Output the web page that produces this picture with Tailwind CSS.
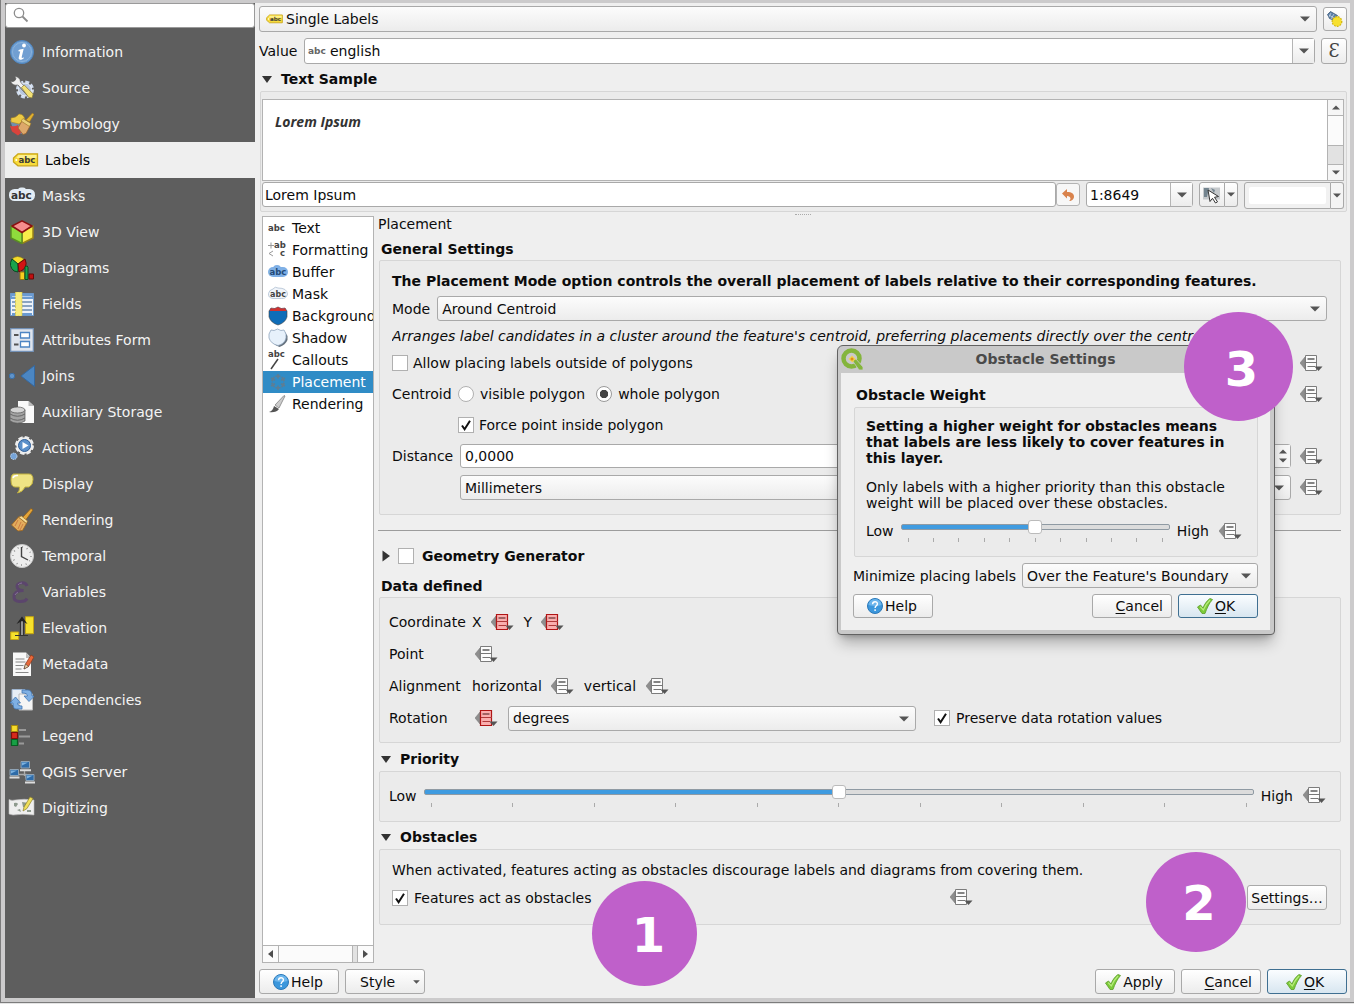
<!DOCTYPE html>
<html lang="en">

<head>
    <meta charset="UTF-8">
    <meta name="viewport" content="width=device-width, initial-scale=1.0">
    <title>Layer Properties - Labels</title>
    <script src="https://cdn.jsdelivr.net/npm/@tailwindcss/browser@4"></script>
</head>

<body class="flex flex-col min-h-screen pb-px bg-[#e4e4e4] font-['DejaVu_Sans',sans-serif] text-sm leading-4 text-[#0c0c0c]">

    <!-- Shared icons -->
    <svg class="hidden">
        <symbol id="i-dd" viewBox="0 0 23 17">
            <path d="M0 8 5 2v12z" fill="#8e8e8e" stroke="#777" stroke-width=".5" />
            <path d="M5.5.5h11v15h-11z" fill="#fcfcfc" stroke="#7c7c7c" />
            <path d="M7.500 4h7" stroke="#666" stroke-width="1.600" />
            <path d="M6 7.500h11M7.500 11.500H15" stroke="#777" />
            <path d="M14.500 11.500h8L18.500 16z" fill="#555" />
        </symbol>
        <symbol id="i-dd-red" viewBox="0 0 23 17">
            <path d="M0 8 5 2v12z" fill="#8e8e8e" stroke="#777" stroke-width=".5" />
            <path d="M5.500.5h11v15h-11z" fill="#faaeae" stroke="#b01515" stroke-width="1.200" />
            <path d="M7.500 4h7" stroke="#8a5050" stroke-width="1.600" />
            <path d="M6 7.500h11M7.500 11.500H15" stroke="#b03a3a" />
            <path d="M14.500 11.500h8L18.500 16z" fill="#555" />
        </symbol>
        <symbol id="i-down" viewBox="0 0 10 6">
            <path d="M0 .5h10L5 5.500z" fill="#555" />
        </symbol>
        <symbol id="i-up" viewBox="0 0 10 6">
            <path d="M0 5.500h10L5 .5z" fill="#555" />
        </symbol>
        <symbol id="i-check" viewBox="0 0 16 16">
            <path d="m4 8.500 2.600 3.800L12 3.800" fill="none" stroke="#111" stroke-width="2" />
        </symbol>
        <symbol id="i-help" viewBox="0 0 16 16">
            <circle cx="8" cy="8" r="7.500" fill="#3c97dc" stroke="#2b78b8" />
            <path d="M1.500 7a6.500 6 0 0 1 13 0q-6 2-13 0z" fill="#6cb5ec" />
            <path d="M5.600 6.200C5.700 2.800 10.500 3 10.400 6c0 1.800-2.300 1.900-2.300 4M8.100 11.300v1.700" fill="none" stroke="#fff" stroke-width="1.400" />
        </symbol>
        <symbol id="i-ok" viewBox="0 0 16 16">
            <path d="m.5 9 3-2 2.500 3C7.500 6 10 2.500 13 .5l2.500 1C12 5.500 10 10 8 15.500H5z" fill="#7ccb3a" stroke="#5a9c28" stroke-width=".8" />
            <path d="M3.200 8.600 6.300 12C8 8 10.500 4.500 13 2" fill="none" stroke="#b9ec7e" stroke-width="1.200" />
        </symbol>
        <symbol id="i-tag" viewBox="0 0 26 14">
            <path d="M5.500.8h19.500v12H5.500L1 9V5z" fill="#f8dc3c" stroke="#c9a51a" stroke-width="1.300" />
            <path d="M6 2h18v3H4z" fill="#fdf08c" />
            <circle cx="3.800" cy="7" r="1" fill="#fff" />
            <text x="6" y="10" font-family="DejaVu Sans" font-weight="bold" font-size="8.500" fill="#3a3a3a">abc</text>
        </symbol>
    </svg>

    <div class="relative flex flex-1 bg-[#cccbcc] border-l border-b border-[#7c7c7c] pt-[3px] px-1 pb-1">

        <!-- Sidebar -->
        <nav class="w-[250px] shrink-0 bg-[#5e5e5e] text-[#f4f4f4]">
            <div class="relative mb-1.5">
                <input type="search" aria-label="Search" class="block w-full h-[25px] bg-white border border-[#9a9a9a] rounded-[3px] pl-7 text-black outline-none">
                <svg class="absolute left-2 top-1 size-4" viewBox="0 0 16 16" fill="none" stroke="#8c8c8c"><circle cx="6" cy="6" r="4.700" stroke-width="1.300" /><path d="m9.500 9.500 5 5" stroke-width="1.800" /></svg>
            </div>
            <a href="#" class="flex items-center gap-2 h-9 pl-[5px]">
                <svg class="size-6" viewBox="0 0 24 24"><circle cx="12" cy="12" r="11.500" fill="#6d9dd0" stroke="#4f86c1" /><circle cx="12" cy="12" r="9.500" fill="#719fd2" stroke="#8ab2dc" /><circle cx="14" cy="5.500" r="1.900" fill="#fff" /><path d="M8.500 10.300c2-1 3.500-1.400 5.200-1.500l-2 8.200c-.2 1.300.8 1 2 .2v1.200c-2.500 1.700-5.500 2-5-.8l1.500-6-1.800-.3z" fill="#fff" /></svg>
                Information
            </a>
            <a href="#" class="flex items-center gap-2 h-9 pl-[5px]">
                <svg class="size-6" viewBox="0 0 24 24"><circle cx="15" cy="13.500" r="7.500" fill="none" stroke="#cfdcef" stroke-width="3" stroke-dasharray="3.900 2" /><circle cx="15" cy="13.500" r="6.500" fill="#b9c8e0" stroke="#edf2fa" /><path d="M9 8l10 11" stroke="#444" stroke-width="3.500" /><path d="M.5 5q2.500 1.500 4.500-.500T4.500.500q5.500 0 6 5.500L20 17l-2.500 2.500L8 9Q2 10 .5 5z" fill="#f0f0f0" stroke="#555" stroke-width=".6" /><path d="m11.500 11.500 2.700-2.500 9 9-1.200 4-3.500-.8z" fill="#f3e176" stroke="#7f7639" stroke-width=".7" /></svg>
                Source
            </a>
            <a href="#" class="flex items-center gap-2 h-9 pl-[5px]">
                <svg class="size-6" viewBox="0 0 24 24"><path d="M0 8q4 1 8-1l8 6-4 9-6-2-4-6z" fill="#6f8fb0" /><path d="M1 6q5 0 8-4 5 0 6 6l-6 4-8-2z" fill="#ecca45" stroke="#aa8520" stroke-width=".6" /><path d="M0 14q5 1 8-1l3 8-3 2.500-6-4z" fill="#d8433c" /><path d="m8 16 4-7 8 5-4 7.500-3 1z" fill="#dda86b" stroke="#99622a" stroke-width=".7" /><path d="m11 9 2-2.500 8 5-1.500 3z" fill="#e8cf7a" stroke="#9b7021" stroke-width=".6" /><path d="m16 8 6.500-7L24 2.500 19.500 10z" fill="#e0b12f" stroke="#9b7021" stroke-width=".6" /></svg>
                Symbology
            </a>
            <a href="#" aria-current="page" class="flex items-center gap-1.5 h-9 pl-[7px] bg-[#efefef] text-black">
                <svg class="w-[27px] h-3.5"><use href="#i-tag" /></svg>
                Labels
            </a>
            <a href="#" class="flex items-center gap-2 h-9 pl-[5px]">
                <svg class="size-6 overflow-visible" viewBox="0 0 24 24"><rect x="-1" y="5" width="26" height="12" rx="5.500" fill="#e3edf6" /><rect x="8" y="3.500" width="8" height="12" rx="3" fill="#e3edf6" /><text x="1" y="14.500" font-family="DejaVu Sans" font-weight="bold" font-size="10.500" fill="#333">abc</text></svg>
                Masks
            </a>
            <a href="#" class="flex items-center gap-2 h-9 pl-[5px]">
                <svg class="size-6" viewBox="0 0 24 24" stroke-width="1.500" stroke-linejoin="round"><path d="m12 11 11-5v12L12 23.500z" fill="#f9ec4a" stroke="#9a8417" /><path d="M12 11 1 6v12l11 5.500z" fill="#8fdc3c" stroke="#5a8c24" /><path d="m12 .8 10 5.200-10 6.500L2 6z" fill="#f68d8d" stroke="#8b1010" /></svg>
                3D View
            </a>
            <a href="#" class="flex items-center gap-2 h-9 pl-[5px]">
                <svg class="size-6" viewBox="0 0 24 24"><path d="M8 8 2 3Q7-2 14 3z" fill="#f6db2b" stroke="#8a7a10" stroke-width=".6" /><path d="M8 8 2 3Q-2 10 4 15l4 1z" fill="#18a34c" stroke="#064d20" /><path d="m8 8 7-5q4 9-6 13z" fill="#d11414" stroke="#690909" /><path d="M10 16h4.500v7.500H10z" fill="#f6cf1f" stroke="#957510" /><path d="M15 10.500q3-1.500 3 1v12h-3z" fill="#18a34c" stroke="#064d20" /><path d="M19 18h4.500v5H19z" fill="#c01010" stroke="#690909" /></svg>
                Diagrams
            </a>
            <a href="#" class="flex items-center gap-2 h-9 pl-[5px]">
                <svg class="size-6" viewBox="0 0 24 24"><path d="M.5 1.500h23v22H.5z" fill="#eef3f9" stroke="#6b97c8" /><path d="M1 2h22v5H1z" fill="#6b9bd2" /><path d="M2 4.500h20" stroke="#b5cfec" /><path d="M2 10h20M2 14h20M2 18h20" stroke="#8aa4c2" stroke-width="1.800" /><path d="M2 22h20" stroke="#6b9bd2" stroke-width="2" /><path d="M5.500 0H12v24H5.500z" fill="#f7ec7d" stroke="#d6c443" stroke-width=".8" stroke-dasharray="2 1" /></svg>
                Fields
            </a>
            <a href="#" class="flex items-center gap-2 h-9 pl-[5px]">
                <svg class="size-6" viewBox="0 0 24 24"><path d="M.7.700h22.600v22.600H.700z" fill="#dfe5ee" stroke="#7391b6" stroke-width="1.200" /><path d="M10.500 4.500h9V10h-9zM10.500 13.500h9V19h-9z" fill="#fff" stroke="#4d85c4" stroke-width="1.300" /><path d="M4 7h4.500M4 16.500h4.500" stroke="#555" stroke-width="2" /></svg>
                Attributes Form
            </a>
            <a href="#" class="flex items-center gap-2 h-9 pl-[5px]">
                <svg class="size-6 overflow-visible" viewBox="0 0 24 24"><circle cx="2" cy="12" r="2.700" fill="#5f93c9" stroke="#3c6ea5" /><path d="M11 12 24.500 1.500v21z" fill="#4b86c2" stroke="#35689f" /></svg>
                Joins
            </a>
            <a href="#" class="flex items-center gap-2 h-9 pl-[5px]">
                <svg class="size-6" viewBox="0 0 24 24"><path d="M8 1h10.500L24 6v17H8z" fill="#fafafa" /><path d="M18.500 1v5H24z" fill="#bbb" /><path d="M0 10v11q7.500 4.500 15 0V10z" fill="#a3a3a3" stroke="#555" stroke-width=".7" /><ellipse cx="7.500" cy="10" rx="7.500" ry="3" fill="#d4d4d4" stroke="#555" stroke-width=".7" /><path d="M0 14q7.500 4.500 15 0M0 18q7.500 4.500 15 0" fill="none" stroke="#666" /></svg>
                Auxiliary Storage
            </a>
            <a href="#" class="flex items-center gap-2 h-9 pl-[5px]">
                <svg class="size-6" viewBox="0 0 24 24"><circle cx="14.500" cy="9.500" r="8" fill="#eee" stroke="#eee" stroke-width="3" stroke-dasharray="4.280 2" /><circle cx="14.500" cy="9.500" r="8" fill="#eee" /><circle cx="14.500" cy="9.500" r="6" fill="#5b90ca" stroke="#2f5f99" /><path d="m12.500 6 6 3.500-6 3.500z" fill="#fff" /><circle cx="3.800" cy="20.300" r="3.200" fill="#76a4d8" stroke="#c1d8ef" stroke-dasharray="1.500 .8" /></svg>
                Actions
            </a>
            <a href="#" class="flex items-center gap-2 h-9 pl-[5px]">
                <svg class="size-6" viewBox="0 0 24 24"><path d="M5 2h14q4 0 4 5.500T19 15h-4q-2 5-7.500 6Q10 18.500 9.500 15H5q-4 0-4-7t4-6z" fill="#efe384" stroke="#c1b13f" /><path d="M3 6q1-3 5-2.500" fill="none" stroke="#fff" stroke-width="1.500" /></svg>
                Display
            </a>
            <a href="#" class="flex items-center gap-2 h-9 pl-[5px]">
                <svg class="size-6" viewBox="0 0 24 24"><path d="m12 10 9-9.500 2 1.500-8 11z" fill="#e3a43a" stroke="#8d5a10" stroke-width=".7" /><path d="m8.500 9 8 6.500-4 7L8 23l-6.500-6z" fill="#e2ac5d" stroke="#9a6119" stroke-width=".8" /><path d="m8.500 9 8 6.500 1-2.500-6-5z" fill="#f3dd97" stroke="#9a6119" stroke-width=".6" /><path d="m8 12-3 6m6-4-3 7m5-5-3 6" stroke="#bf5b33" stroke-width=".6" /></svg>
                Rendering
            </a>
            <a href="#" class="flex items-center gap-2 h-9 pl-[5px]">
                <svg class="size-6" viewBox="0 0 24 24"><circle cx="12" cy="12" r="11.500" fill="#eee" stroke="#c9c9c9" /><circle cx="12" cy="12" r="9" fill="none" stroke="#777" stroke-width="1.500" stroke-dasharray=".8 3.910" /><path d="M11.500 3v9.500L18 16" fill="none" stroke="#444" stroke-width="1.400" /></svg>
                Temporal
            </a>
            <a href="#" class="flex items-center gap-2 h-9 pl-[5px]">
                <svg class="size-6" viewBox="0 0 24 24"><path d="M17 6C15.500 1.500 7 2 7 6.500c0 3 3.500 4.200 6.500 4C9 10.500 4 12 4 17c0 6 11 5.500 13 1.500" fill="none" stroke="#5b456c" stroke-width="3" /><path d="M8 5q1.500-2 4-2M5 15q1-2 3-2.500" fill="none" stroke="#87729a" /></svg>
                Variables
            </a>
            <a href="#" class="flex items-center gap-2 h-9 pl-[5px]">
                <svg class="size-6" viewBox="0 0 24 24"><path d="M15.500.700h8v17h-8z" fill="#f6e12c" stroke="#c3a312" /><path d="M.700 16h8v7.500h-8z" fill="#f6e12c" stroke="#c3a312" /><path d="M10.500 19V5M13.500 19V5M5 19.500h13" stroke="#333" stroke-width="1.200" /><path d="M12 19V5" stroke="#aaa" stroke-width="1.500" /><path d="M6.500 8 12 .500 17.500 8 12 5z" fill="#222" /></svg>
                Elevation
            </a>
            <a href="#" class="flex items-center gap-2 h-9 pl-[5px]">
                <svg class="size-6" viewBox="0 0 24 24"><path d="M3 .5h13l5 5V24H3z" fill="#f8f8f8" /><path d="M16 .5V6h5z" fill="#bbb" /><path d="M5.500 7h9M5.500 10h10M5.500 13.500h8M5.500 17h6M5.500 20.500h13" stroke="#888" /><path d="m14 17 1.500-5L21 3l3 2-5.500 9.500z" fill="#e8683a" stroke="#8b3415" stroke-width=".7" /><path d="m14 17 1.500-5 3 2.500z" fill="#efd3a5" stroke="#333" stroke-width=".5" /></svg>
                Metadata
            </a>
            <a href="#" class="flex items-center gap-2 h-9 pl-[5px]">
                <svg class="size-6" viewBox="0 0 24 24"><path d="M2 1.500h13v15H2z" fill="#e8eef5" stroke="#9eb4cf" /><path d="M9 6h13.500v16H9z" fill="#f5f5f5" stroke="#bbb" /><path d="M12 2h6q4 0 4 6h2.500L19 13.500 14 8h3.500q0-3-5.500-3z" fill="#7fb0e4" stroke="#4176b2" stroke-width=".8" /><path d="M12 21H6q-3 0-3-6H0l5.500-6 5 6H7.500q0 3 4.500 3z" fill="#7fb0e4" stroke="#4176b2" stroke-width=".8" /></svg>
                Dependencies
            </a>
            <a href="#" class="flex items-center gap-2 h-9 pl-[5px]">
                <svg class="size-6" viewBox="0 0 24 24" stroke-width="1.200"><path d="M1.500 1.500h6v6h-6z" fill="#f6db2b" stroke="#a88a10" /><path d="M1.500 8.500h6v6h-6z" fill="#d62a1c" stroke="#7d0f0a" /><path d="M1.500 15.500h6v6h-6z" fill="#17a045" stroke="#075e22" /><path d="M9 6h7M9 12.500h11M9 19.500h5" stroke="#999" stroke-width="2" /></svg>
                Legend
            </a>
            <a href="#" class="flex items-center gap-2 h-9 pl-[5px]">
                <svg class="size-6 overflow-visible" viewBox="0 0 24 24"><path d="M14.500 11v5M9 14.500h7v4" fill="none" stroke="#aaa" stroke-width="1.300" /><g fill="#2e6ba8" stroke="#8fa3b5"><path d="M11 1.500h8.500V8H11zM0 9.500h8.500v6H0zM16 14.500h8v6h-8z" /></g><path d="M12 2.500h6l-6 3zM1 10.500h6l-6 3zM17 15.500h6l-6 3z" fill="#7bb1df" /><path d="M10 10.200h11M-.500 17.500h10M15 22.500h10" stroke="#ddd" stroke-width="2" /></svg>
                QGIS Server
            </a>
            <a href="#" class="flex items-center gap-2 h-9 pl-[5px]">
                <svg class="size-6 overflow-visible" viewBox="0 0 24 24"><path d="M-1 3.500q3 1.500 6 .5 9-1.500 19 0V19q-12-1.500-21 0l-4-1z" fill="#eee" stroke="#bbb" stroke-width=".6" /><path d="M4 7q3-1 4 1l-2 3-2-1zM12 6l7 1-2 5-4-1zM7 14l3-1 1 3zM17 14h4v2h-4z" fill="#8e9a8e" /><path d="m13 15 1-4 6-10 3 1.500-6 10z" fill="#f0e05c" stroke="#8d812c" stroke-width=".7" /></svg>
                Digitizing
            </a>
        </nav>

        <!-- Right side -->
        <main class="flex flex-col flex-1 min-w-0 bg-[#efefef] pt-[3px] pl-1 pr-[3px] pb-1">

            <div class="flex items-center gap-1.5">
                <div class="relative flex-1">
                    <svg class="absolute left-[7px] top-2 w-[17px] h-2.5"><use href="#i-tag" /></svg>
                    <select aria-label="Label mode" class="block appearance-none w-full h-[26px] pl-[26px] pr-8 rounded-[3px] border border-[#a9a9a9] bg-linear-to-b from-[#fcfcfc] to-[#ececec]">
                        <option>Single Labels</option>
                    </select>
                    <svg class="absolute right-[7px] top-2.5 w-2.5 h-1.5"><use href="#i-down" /></svg>
                </div>
                <button type="button" aria-label="Automated placement settings" class="flex items-center justify-center size-6 rounded-[3px] border border-[#a9a9a9] bg-linear-to-b from-white to-[#ececec]">
                    <svg class="size-4" viewBox="0 0 16 16"><path d="m.5 3.500 3-3 7 4-3 5-5-2z" fill="#5b80a8" stroke="#35506e" stroke-width=".7" /><path d="m2 4 5 3M4 2 2 6m5-3L4 8" stroke="#e5edf5" stroke-width=".6" /><circle cx="10" cy="10.500" r="4.700" fill="#f7e02f" stroke="#d4b913" stroke-width="1.500" stroke-dasharray="1.800 1" /><circle cx="10" cy="10.500" r="4" fill="#f7e02f" /></svg>
                </button>
            </div>

            <div class="flex items-center gap-1.5 mt-1.5">
                <label for="value" class="w-[39px]">Value</label>
                <div class="relative flex-1">
                    <span class="absolute left-1 top-[5px] text-[9px] leading-4 font-bold text-[#666]">abc</span>
                    <select id="value" class="block appearance-none w-full h-[26px] pl-[25px] pr-8 rounded-[3px] border border-[#a9a9a9] bg-white">
                        <option>english</option>
                    </select>
                    <span class="absolute inset-y-px right-px w-[22px] flex items-center justify-center border-l border-[#b5b5b5] bg-linear-to-b from-white to-[#ececec] pointer-events-none">
                        <svg class="w-2.5 h-1.5"><use href="#i-down" /></svg>
                    </span>
                </div>
                <button type="button" aria-label="Expression" class="size-[26px] rounded-[3px] border border-[#a9a9a9] bg-linear-to-b from-white to-[#ececec] font-['DejaVu_Serif',serif] text-lg leading-5 text-[#444]">Ɛ</button>
            </div>

            <h2 class="flex items-center gap-[9px] pl-[3px] mt-[7px] h-4 font-bold">
                <svg class="w-2.5 h-[7px]" viewBox="0 0 10 7"><path d="M0 0h10L5 7z" fill="#333" /></svg>
                Text Sample
            </h2>

            <section class="mt-1 ml-px border border-[#d6d6d6] bg-[#ebebeb] rounded-xs px-px pr-0.5 pt-[7px] pb-[3px]">
                <div class="flex h-[82px] border border-[#b3b3b3] bg-white">
                    <p class="flex-1 pt-3.5 pl-3 font-['Open_Sans',sans-serif] font-bold italic text-[#333]">Lorem Ipsum</p>
                    <div class="flex flex-col w-4 border-l border-[#b3b3b3] bg-[#e2e2e2]">
                        <span class="flex items-center justify-center h-4 bg-[#f6f6f6] border-b border-[#b3b3b3]"><svg class="w-2 h-[5px]"><use href="#i-up" /></svg></span>
                        <span class="h-[30px] bg-[#fbfbfb] border-b border-[#b3b3b3]"></span>
                        <span class="flex items-center justify-center h-4 mt-auto bg-[#f6f6f6] border-t border-[#b3b3b3]"><svg class="w-2 h-[5px]"><use href="#i-down" /></svg></span>
                    </div>
                </div>
                <div class="flex items-start gap-1.5 mt-px h-[26px]">
                    <div class="flex flex-1 items-center">
                        <input type="text" aria-label="Sample text" value="Lorem Ipsum" class="flex-1 h-[25px] px-0.5 rounded-[3px] border border-[#a9a9a9] bg-white outline-none">
                        <button type="button" aria-label="Reset sample text" class="flex items-center justify-center w-6 h-[23px] rounded-[3px] border border-[#b3b3b3] bg-[#f7f7f7]">
                            <svg class="size-3.5" viewBox="0 0 14 14"><path d="m1 5.500 5-4.500v3c5 0 7 2 7 4.500C13 11 11 13 8 13c2-1.500 2.500-4.500-2-5v2.500z" fill="#d9834d" /></svg>
                        </button>
                    </div>
                    <div class="relative w-[107px]">
                        <select aria-label="Scale" class="block appearance-none w-full h-[25px] pl-[3px] rounded-[3px] border border-[#a9a9a9] bg-white">
                            <option>1:8649</option>
                        </select>
                        <span class="absolute inset-y-px right-px w-[22px] flex items-center justify-center border-l border-[#b5b5b5] bg-linear-to-b from-white to-[#ececec] pointer-events-none">
                            <svg class="w-2.5 h-1.5"><use href="#i-down" /></svg>
                        </span>
                    </div>
                    <div class="flex">
                        <button type="button" aria-label="Use canvas scale" class="flex items-center justify-center w-[26px] h-[25px] rounded-l-[3px] border border-[#a9a9a9] bg-linear-to-b from-white to-[#ececec]">
                            <svg class="size-[18px]" viewBox="0 0 18 18"><path d="M0 1.500h17v12H0z" fill="#c5c9cc" /><path d="M1 2h5L4 11H1zM8 2l4 2-1 3z" fill="#73848f" /><path d="m5 4 10.500 6.500-4 .8 3 4.500-2 1.200-3-4.700L7 15.500z" fill="#fff" stroke="#333" /></svg>
                        </button>
                        <button type="button" aria-label="Scale menu" class="flex items-center justify-center w-[13px] h-[25px] rounded-r-[3px] border border-l-0 border-[#a9a9a9] bg-linear-to-b from-white to-[#ececec]">
                            <svg class="w-2 h-[5px]"><use href="#i-down" /></svg>
                        </button>
                    </div>
                    <div class="flex">
                        <button type="button" aria-label="Preview background color" class="w-[87px] h-[27px] p-1 rounded-l-[3px] border border-[#a9a9a9] bg-[#f1f1f1]"><span class="block h-full bg-white rounded-xs"></span></button>
                        <button type="button" aria-label="Color menu" class="flex items-center justify-center w-[13px] h-[27px] rounded-r-[3px] border border-l-0 border-[#a9a9a9] bg-[#f4f4f4]">
                            <svg class="w-2 h-[5px]"><use href="#i-down" /></svg>
                        </button>
                    </div>
                </div>
            </section>

            <div class="flex justify-center items-center h-1">
                <span class="w-4 border-t border-dotted border-[#aaa]"></span>
            </div>

            <div class="flex flex-1 gap-1 pl-[3px]">

                <!-- Label option pages -->
                <div class="flex flex-col w-28 shrink-0 border border-[#b3b3b3] bg-white overflow-hidden">
                    <a href="#" class="flex items-center gap-1 h-[22px] pl-[5px]"><svg class="size-5 shrink-0" viewBox="0 0 20 20"><text x="0" y="13" font-family="DejaVu Sans" font-weight="bold" font-size="8.500" fill="#444">abc</text></svg>Text</a>
                    <a href="#" class="flex items-center gap-1 h-[22px] pl-[5px]"><svg class="size-5 shrink-0" viewBox="0 0 20 20"><text x="6" y="8" font-family="DejaVu Sans" font-weight="bold" font-size="8.500" fill="#444">ab</text><text x="12" y="16" font-family="DejaVu Sans" font-weight="bold" font-size="8.500" fill="#444">c</text><path d="M0 5.500h6M3 2.500v6M5 11l-4 2.500L5 16" fill="none" stroke="#999" /></svg>Formatting</a>
                    <a href="#" class="flex items-center gap-1 h-[22px] pl-[5px]"><svg class="size-5 shrink-0" viewBox="0 0 20 20"><rect y="5" width="20" height="10" rx="5" fill="#7fb0e6" /><rect x="5" y="3" width="8" height="8" rx="4" fill="#7fb0e6" /><text x="1.500" y="12.500" font-family="DejaVu Sans" font-weight="bold" font-size="8.500" fill="#244a78">abc</text></svg>Buffer</a>
                    <a href="#" class="flex items-center gap-1 h-[22px] pl-[5px]"><svg class="size-5 shrink-0" viewBox="0 0 20 20"><path d="M5 5q2-3 5-1 9 0 9.500 6-1 5-6 4.500H5Q0 14 .5 9.500 1 6 5 5z" fill="#f1f5fa" stroke="#aebfd2" stroke-width=".8" /><text x="2" y="12.500" font-family="DejaVu Sans" font-weight="bold" font-size="8" fill="#444">abc</text></svg>Mask</a>
                    <a href="#" class="flex items-center gap-1 h-[22px] pl-[5px]"><svg class="size-5 shrink-0" viewBox="0 0 20 20"><path d="M3 2q3.500 1.500 7-1 3.500 2.500 7 1l2 3v6q-2 6-9 8-7-2-9-8V5z" fill="#0f6db8" stroke="#444" stroke-width=".6" /><path d="M3 2q3.500 1.500 7-1 3.500 2.500 7 1l1.500 3h-17z" fill="#cf3330" /></svg>Background</a>
                    <a href="#" class="flex items-center gap-1 h-[22px] pl-[5px]"><svg class="size-5 shrink-0" viewBox="0 0 20 20"><path d="M4 4q3 1 7-1 3 2 6 1l2.500 4v4q-2 5-8 7-6-2-8-7z" fill="#66727e" /><path d="M3 2q3 1.500 6.500-1Q13 3.500 16 2l2 4v4q-1.500 6-8 7.500Q3 16 1 10V6z" fill="#e7f1fb" stroke="#8fa5bd" stroke-width=".8" /></svg>Shadow</a>
                    <a href="#" class="flex items-center gap-1 h-[22px] pl-[5px]"><svg class="size-5 shrink-0 overflow-visible" viewBox="0 0 20 20"><text x="0" y="7" font-family="DejaVu Sans" font-weight="bold" font-size="8.500" fill="#444">abc</text><path d="m3 19 7-10" stroke="#444" stroke-width="1.500" /></svg>Callouts</a>
                    <a href="#" aria-current="page" class="flex items-center gap-1 h-[22px] pl-[5px] bg-[#308cc6] text-white"><svg class="size-5 shrink-0" viewBox="0 0 20 20"><g fill="none" stroke="#5f7d92" stroke-width="1.600"><path id="pm" d="M10 6.500V2M7.500 4.200h5" /><use href="#pm" transform="rotate(60 10 10)" /><use href="#pm" transform="rotate(120 10 10)" /><use href="#pm" transform="rotate(180 10 10)" /><use href="#pm" transform="rotate(240 10 10)" /><use href="#pm" transform="rotate(300 10 10)" /></g></svg>Placement</a>
                    <a href="#" class="flex items-center gap-1 h-[22px] pl-[5px]"><svg class="size-5 shrink-0" viewBox="0 0 20 20"><path d="m7 11 9-9.500 1 .5-6 12z" fill="#ccc" stroke="#777" stroke-width=".7" /><path d="M1 18q4-1 5-6l5 3q-3 4-10 3z" fill="#555" /></svg>Rendering</a>
                    <div class="flex h-[17px] mt-auto border-t border-[#b3b3b3] bg-[#e2e2e2]">
                        <span class="flex items-center justify-center w-4 bg-[#fbfbfb] border-r border-[#b3b3b3]"><svg class="w-[5px] h-2" viewBox="0 0 5 8"><path d="M5 0v8L0 4z" fill="#4d4d4d" /></svg></span>
                        <span class="w-[74px] bg-[#fbfbfb] border-r border-[#b3b3b3]"></span>
                        <span class="flex items-center justify-center w-4 ml-auto bg-[#fbfbfb] border-l border-[#b3b3b3]"><svg class="w-[5px] h-2" viewBox="0 0 5 8"><path d="M0 0v8l5-4z" fill="#4d4d4d" /></svg></span>
                    </div>
                </div>

                <!-- Placement page -->
                <div class="flex-1 min-w-0 pr-1.5">
                    <p>Placement</p>
                    <h2 class="mt-[9px] pl-[3px] font-bold">General Settings</h2>
                    <section class="flex flex-col gap-[7px] mt-[3px] ml-px border border-[#d6d6d6] bg-[#ebebeb] rounded-xs pl-3 pr-[13px] pt-3 pb-3.5">
                        <p class="font-bold">The Placement Mode option controls the overall placement of labels relative to their corresponding features.</p>
                        <div class="flex items-center gap-[7px]">
                            <label for="mode">Mode</label>
                            <div class="relative flex-1">
                                <select id="mode" class="block appearance-none w-full h-[25px] px-1 rounded-[3px] border border-[#a9a9a9] bg-linear-to-b from-[#fcfcfc] to-[#ececec]">
                                    <option>Around Centroid</option>
                                </select>
                                <svg class="absolute right-[7px] top-2.5 w-2.5 h-1.5"><use href="#i-down" /></svg>
                            </div>
                        </div>
                        <p class="italic whitespace-nowrap overflow-hidden">Arranges label candidates in a cluster around the feature's centroid, preferring placements directly over the centroid.</p>
                        <div class="flex items-center justify-between h-6 pr-1">
                            <label class="flex items-center gap-[5px]">
                                <span class="relative"><input type="checkbox" class="peer block appearance-none size-4 bg-white border border-[#b0b0b0]"><svg class="absolute inset-0 size-4 hidden peer-checked:block"><use href="#i-check" /></svg></span>
                                Allow placing labels outside of polygons
                            </label>
                            <button type="button" aria-label="Data defined: polygon placement"><svg class="w-[23px] h-[17px]"><use href="#i-dd" /></svg></button>
                        </div>
                        <div class="flex items-center h-6 pr-1">
                            <span class="w-[66px]">Centroid</span>
                            <label class="flex items-center gap-1.5">
                                <input type="radio" name="centroid" class="appearance-none size-4 rounded-full bg-white border border-[#b0b0b0] checked:border-[#999] checked:bg-radial checked:from-[#444] checked:from-40% checked:to-white checked:to-45%">
                                visible polygon
                            </label>
                            <label class="flex items-center gap-1.5 ml-[11px]">
                                <input type="radio" name="centroid" checked class="appearance-none size-4 rounded-full bg-white border border-[#b0b0b0] checked:border-[#999] checked:bg-radial checked:from-[#444] checked:from-40% checked:to-white checked:to-45%">
                                whole polygon
                            </label>
                            <button type="button" aria-label="Data defined: centroid" class="ml-auto"><svg class="w-[23px] h-[17px]"><use href="#i-dd" /></svg></button>
                        </div>
                        <div class="flex items-center h-6 pl-[66px]">
                            <label class="flex items-center gap-[5px]">
                                <span class="relative"><input type="checkbox" checked class="peer block appearance-none size-4 bg-white border border-[#b0b0b0]"><svg class="absolute inset-0 size-4 hidden peer-checked:block"><use href="#i-check" /></svg></span>
                                Force point inside polygon
                            </label>
                        </div>
                        <div class="flex items-center pr-1">
                            <label for="distance" class="w-[68px]">Distance</label>
                            <div class="relative flex-1">
                                <input id="distance" type="text" value="0,0000" class="block w-full h-6 px-1 rounded-[3px] border border-[#a9a9a9] bg-white outline-none">
                                <span class="absolute inset-y-px right-px w-4 flex flex-col items-center justify-center gap-1 bg-[#f7f7f7] border-l border-[#b5b5b5] pointer-events-none">
                                    <svg class="w-2 h-[5px]"><use href="#i-up" /></svg>
                                    <svg class="w-2 h-[5px]"><use href="#i-down" /></svg>
                                </span>
                            </div>
                            <button type="button" aria-label="Data defined: distance" class="ml-[9px]"><svg class="w-[23px] h-[17px]"><use href="#i-dd" /></svg></button>
                        </div>
                        <div class="flex items-center pl-[68px] pr-1">
                            <div class="relative flex-1">
                                <select aria-label="Distance unit" class="block appearance-none w-full h-[25px] px-1 rounded-[3px] border border-[#a9a9a9] bg-linear-to-b from-[#fcfcfc] to-[#ececec]">
                                    <option>Millimeters</option>
                                </select>
                                <svg class="absolute right-[7px] top-2.5 w-2.5 h-1.5"><use href="#i-down" /></svg>
                            </div>
                            <button type="button" aria-label="Data defined: distance unit" class="ml-[9px]"><svg class="w-[23px] h-[17px]"><use href="#i-dd" /></svg></button>
                        </div>
                    </section>

                    <hr class="mt-[15px] border-[#9c9c9c]">

                    <label class="flex items-center gap-2 h-6 mt-[13px] pl-1 font-bold">
                        <svg class="w-2 h-3" viewBox="0 0 8 12"><path d="M.5.5v11L8 6z" fill="#333" /></svg>
                        <input type="checkbox" class="appearance-none size-4 bg-white border border-[#b0b0b0]">
                        Geometry Generator
                    </label>

                    <h2 class="mt-2.5 pl-[3px] font-bold">Data defined</h2>
                    <section class="mt-[3px] ml-px border border-[#d6d6d6] bg-[#ebebeb] rounded-xs pl-[9px] pr-3 py-2">
                        <div class="flex items-center h-8">
                            <span class="w-[83px]">Coordinate</span>
                            X
                            <button type="button" aria-label="Data defined: X" class="ml-[9px] mr-2.5"><svg class="w-[23px] h-[17px]"><use href="#i-dd-red" /></svg></button>
                            Y
                            <button type="button" aria-label="Data defined: Y" class="ml-[9px]"><svg class="w-[23px] h-[17px]"><use href="#i-dd-red" /></svg></button>
                        </div>
                        <div class="flex items-center h-8">
                            <span class="w-[86px]">Point</span>
                            <button type="button" aria-label="Data defined: point"><svg class="w-[23px] h-[17px]"><use href="#i-dd" /></svg></button>
                        </div>
                        <div class="flex items-center h-8">
                            <span class="w-[83px]">Alignment</span>
                            horizontal
                            <button type="button" aria-label="Data defined: horizontal alignment" class="ml-[9px] mr-2.5"><svg class="w-[23px] h-[17px]"><use href="#i-dd" /></svg></button>
                            vertical
                            <button type="button" aria-label="Data defined: vertical alignment" class="ml-2.5"><svg class="w-[23px] h-[17px]"><use href="#i-dd" /></svg></button>
                        </div>
                        <div class="flex items-center h-8">
                            <label for="rotation" class="w-[86px]">Rotation</label>
                            <button type="button" aria-label="Data defined: rotation"><svg class="w-[23px] h-[17px]"><use href="#i-dd-red" /></svg></button>
                            <div class="relative w-[408px] ml-2.5">
                                <select id="rotation" class="block appearance-none w-full h-[25px] px-1 rounded-[3px] border border-[#a9a9a9] bg-linear-to-b from-[#fcfcfc] to-[#ececec]">
                                    <option>degrees</option>
                                </select>
                                <svg class="absolute right-[7px] top-2.5 w-2.5 h-1.5"><use href="#i-down" /></svg>
                            </div>
                            <label class="flex items-center gap-1.5 ml-[18px]">
                                <span class="relative"><input type="checkbox" checked class="peer block appearance-none size-4 bg-white border border-[#b0b0b0]"><svg class="absolute inset-0 size-4 hidden peer-checked:block"><use href="#i-check" /></svg></span>
                                Preserve data rotation values
                            </label>
                        </div>
                    </section>

                    <h2 class="flex items-center gap-[9px] mt-2 pl-[3px] font-bold">
                        <svg class="w-2.5 h-[7px]" viewBox="0 0 10 7"><path d="M0 0h10L5 7z" fill="#333" /></svg>
                        Priority
                    </h2>
                    <section class="flex items-center h-[51px] mt-1 ml-px border border-[#d6d6d6] bg-[#ebebeb] rounded-xs pl-[9px] pr-3.5 pb-0.5">
                        <label for="priority">Low</label>
                        <div class="flex-1 mx-[7px]">
                            <input id="priority" type="range" min="0" max="10" value="5" class="block appearance-none w-full h-3.5 bg-transparent [&::-webkit-slider-runnable-track]:h-1.5 [&::-webkit-slider-runnable-track]:rounded-xs [&::-webkit-slider-runnable-track]:border [&::-webkit-slider-runnable-track]:border-[#8f9aa3] [&::-webkit-slider-runnable-track]:bg-linear-to-r [&::-webkit-slider-runnable-track]:from-[#3f9be0] [&::-webkit-slider-runnable-track]:from-50% [&::-webkit-slider-runnable-track]:to-[#dcdcdc] [&::-webkit-slider-runnable-track]:to-50% [&::-webkit-slider-thumb]:appearance-none [&::-webkit-slider-thumb]:size-3.5 [&::-webkit-slider-thumb]:-mt-[5px] [&::-webkit-slider-thumb]:rounded-[3px] [&::-webkit-slider-thumb]:border [&::-webkit-slider-thumb]:border-[#bbb] [&::-webkit-slider-thumb]:bg-white">
                            <div class="flex justify-between px-[7px] pt-1">
                                <i class="w-px h-1 bg-[#aaa]"></i><i class="w-px h-1 bg-[#aaa]"></i><i class="w-px h-1 bg-[#aaa]"></i><i class="w-px h-1 bg-[#aaa]"></i><i class="w-px h-1 bg-[#aaa]"></i><i class="w-px h-1 bg-[#aaa]"></i><i class="w-px h-1 bg-[#aaa]"></i><i class="w-px h-1 bg-[#aaa]"></i><i class="w-px h-1 bg-[#aaa]"></i><i class="w-px h-1 bg-[#aaa]"></i><i class="w-px h-1 bg-[#aaa]"></i>
                            </div>
                        </div>
                        High
                        <button type="button" aria-label="Data defined: priority" class="ml-2.5"><svg class="w-[23px] h-[17px]"><use href="#i-dd" /></svg></button>
                    </section>

                    <h2 class="flex items-center gap-[9px] mt-[7px] pl-[3px] font-bold">
                        <svg class="w-2.5 h-[7px]" viewBox="0 0 10 7"><path d="M0 0h10L5 7z" fill="#333" /></svg>
                        Obstacles
                    </h2>
                    <section class="mt-1 ml-px border border-[#d6d6d6] bg-[#ebebeb] rounded-xs pl-3 pr-[13px] pt-3 pb-3.5">
                        <p>When activated, features acting as obstacles discourage labels and diagrams from covering them.</p>
                        <div class="flex items-center mt-[7px]">
                            <label class="flex items-center gap-1.5">
                                <span class="relative"><input type="checkbox" checked class="peer block appearance-none size-4 bg-white border border-[#b0b0b0]"><svg class="absolute inset-0 size-4 hidden peer-checked:block"><use href="#i-check" /></svg></span>
                                Features act as obstacles
                            </label>
                            <button type="button" aria-label="Data defined: obstacles" class="ml-auto mr-[274px]"><svg class="w-[23px] h-[17px]"><use href="#i-dd" /></svg></button>
                            <button type="button" class="w-20 h-[25px] rounded-[3px] border border-[#a9a9a9] bg-linear-to-b from-white to-[#ececec]">Settings…</button>
                        </div>
                    </section>
                </div>
            </div>

            <!-- Button bar -->
            <div class="flex items-center gap-1.5 mt-1.5">
                <button type="button" class="flex items-center justify-center gap-0.5 w-20 h-[25px] pr-0.5 rounded-[3px] border border-[#a9a9a9] bg-linear-to-b from-white to-[#ececec]">
                    <svg class="size-4"><use href="#i-help" /></svg>Help
                </button>
                <button type="button" class="flex items-center justify-between w-20 h-[25px] pl-3.5 pr-1 rounded-[3px] border border-[#a9a9a9] bg-linear-to-b from-white to-[#ececec]">
                    Style <svg class="w-[7px] h-1"><use href="#i-down" /></svg>
                </button>
                <button type="button" class="flex items-center justify-center gap-0.5 w-20 h-[25px] pr-0.5 ml-auto rounded-[3px] border border-[#a9a9a9] bg-linear-to-b from-white to-[#ececec]">
                    <svg class="size-4"><use href="#i-ok" /></svg>Apply
                </button>
                <button type="button" class="flex items-center justify-end w-20 h-[25px] pr-2 rounded-[3px] border border-[#a9a9a9] bg-linear-to-b from-white to-[#ececec]">
                    <span><span class="underline underline-offset-2">C</span>ancel</span>
                </button>
                <button type="button" class="flex items-center justify-center gap-0.5 w-20 h-[25px] pr-1 rounded-[3px] border border-[#3f6f91] bg-linear-to-b from-[#fafdff] to-[#d8e6f0]">
                    <svg class="size-4"><use href="#i-ok" /></svg><span><span class="underline underline-offset-2">O</span>K</span>
                </button>
            </div>
        </main>

        <!-- Obstacle settings dialog -->
        <div role="dialog" aria-labelledby="dlg-title" class="absolute right-[79px] top-[345px] w-[438px] border border-[#626262] rounded-t-md rounded-b-sm bg-[#c9c9c9] pl-[3px] pr-1 pb-1 shadow-lg/30">
            <div class="relative h-[27px]">
                <svg class="absolute left-0 top-0.5 size-[22px]" viewBox="0 0 22 22"><circle cx="10.500" cy="10.500" r="8" fill="none" stroke="#84b53c" stroke-width="4.500" /><path d="m11 12 4-1 7 8v3h-4z" fill="#84b53c" stroke="#c9c9c9" stroke-width=".8" /><path d="m7.500 11 3.500-3.500 3.500 3.500-3 3.500z" fill="#f2d34d" /><circle cx="11" cy="11" r="1.500" fill="#e08a1c" /></svg>
                <h2 id="dlg-title" class="pt-[5px] pr-5 text-center font-bold text-[#4a4a4a]">Obstacle Settings</h2>
            </div>
            <div class="bg-[#efefef] px-3 pt-3.5 pb-3">
                <h3 class="pl-[3px] font-bold">Obstacle Weight</h3>
                <section class="mt-1 ml-px border border-[#d6d6d6] bg-[#ebebeb] rounded-xs px-[11px] pt-2.5 pb-3.5">
                    <p class="font-bold">Setting a higher weight for obstacles means that labels are less likely to cover features in this layer.</p>
                    <p class="mt-[13px]">Only labels with a higher priority than this obstacle weight will be placed over these obstacles.</p>
                    <div class="flex items-center mt-[9px] pr-1">
                        <label for="weight">Low</label>
                        <div class="flex-1 mx-[7px]">
                            <input id="weight" type="range" min="0" max="10" value="5" class="block appearance-none w-full h-3.5 bg-transparent [&::-webkit-slider-runnable-track]:h-1.5 [&::-webkit-slider-runnable-track]:rounded-xs [&::-webkit-slider-runnable-track]:border [&::-webkit-slider-runnable-track]:border-[#8f9aa3] [&::-webkit-slider-runnable-track]:bg-linear-to-r [&::-webkit-slider-runnable-track]:from-[#3f9be0] [&::-webkit-slider-runnable-track]:from-50% [&::-webkit-slider-runnable-track]:to-[#dcdcdc] [&::-webkit-slider-runnable-track]:to-50% [&::-webkit-slider-thumb]:appearance-none [&::-webkit-slider-thumb]:size-3.5 [&::-webkit-slider-thumb]:-mt-[5px] [&::-webkit-slider-thumb]:rounded-[3px] [&::-webkit-slider-thumb]:border [&::-webkit-slider-thumb]:border-[#bbb] [&::-webkit-slider-thumb]:bg-white">
                            <div class="flex justify-between px-[7px] pt-1">
                                <i class="w-px h-1 bg-[#aaa]"></i><i class="w-px h-1 bg-[#aaa]"></i><i class="w-px h-1 bg-[#aaa]"></i><i class="w-px h-1 bg-[#aaa]"></i><i class="w-px h-1 bg-[#aaa]"></i><i class="w-px h-1 bg-[#aaa]"></i><i class="w-px h-1 bg-[#aaa]"></i><i class="w-px h-1 bg-[#aaa]"></i><i class="w-px h-1 bg-[#aaa]"></i><i class="w-px h-1 bg-[#aaa]"></i><i class="w-px h-1 bg-[#aaa]"></i>
                            </div>
                        </div>
                        High
                        <button type="button" aria-label="Data defined: obstacle weight" class="ml-2.5"><svg class="w-[23px] h-[17px]"><use href="#i-dd" /></svg></button>
                    </div>
                </section>
                <div class="flex items-center gap-1.5 mt-1.5">
                    <label for="minimize" class="whitespace-nowrap">Minimize placing labels</label>
                    <div class="relative flex-1">
                        <select id="minimize" class="block appearance-none w-full h-[25px] px-1 rounded-[3px] border border-[#a9a9a9] bg-linear-to-b from-[#fcfcfc] to-[#ececec]">
                            <option>Over the Feature's Boundary</option>
                        </select>
                        <svg class="absolute right-[7px] top-2.5 w-2.5 h-1.5"><use href="#i-down" /></svg>
                    </div>
                </div>
                <div class="flex items-center gap-1.5 mt-1.5">
                    <button type="button" class="flex items-center justify-center gap-0.5 w-20 h-6 pr-0.5 rounded-[3px] border border-[#a9a9a9] bg-linear-to-b from-white to-[#ececec]">
                        <svg class="size-4"><use href="#i-help" /></svg>Help
                    </button>
                    <button type="button" class="flex items-center justify-end w-20 h-6 pr-2 ml-auto rounded-[3px] border border-[#a9a9a9] bg-linear-to-b from-white to-[#ececec]">
                        <span><span class="underline underline-offset-2">C</span>ancel</span>
                    </button>
                    <button type="button" class="flex items-center justify-center gap-0.5 w-20 h-6 pr-1 rounded-[3px] border border-[#3f6f91] bg-linear-to-b from-[#fafdff] to-[#d8e6f0]">
                        <svg class="size-4"><use href="#i-ok" /></svg><span><span class="underline underline-offset-2">O</span>K</span>
                    </button>
                </div>
            </div>
        </div>

        <!-- Step markers -->
        <span class="absolute left-[591px] top-[881px] flex items-center justify-center size-[105px] pl-2 pt-0.5 rounded-full bg-[#bf60ca] text-white text-5xl font-bold">1</span>
        <span class="absolute right-[108px] top-[852px] flex items-center justify-center size-[100px] pl-1.5 pt-0.5 rounded-full bg-[#bf60ca] text-white text-5xl font-bold">2</span>
        <span class="absolute right-[61px] top-[312px] flex items-center justify-center size-[109px] pl-1.5 pt-1 rounded-full bg-[#bf60ca] text-white text-5xl font-bold">3</span>
    </div>
</body>

</html>
